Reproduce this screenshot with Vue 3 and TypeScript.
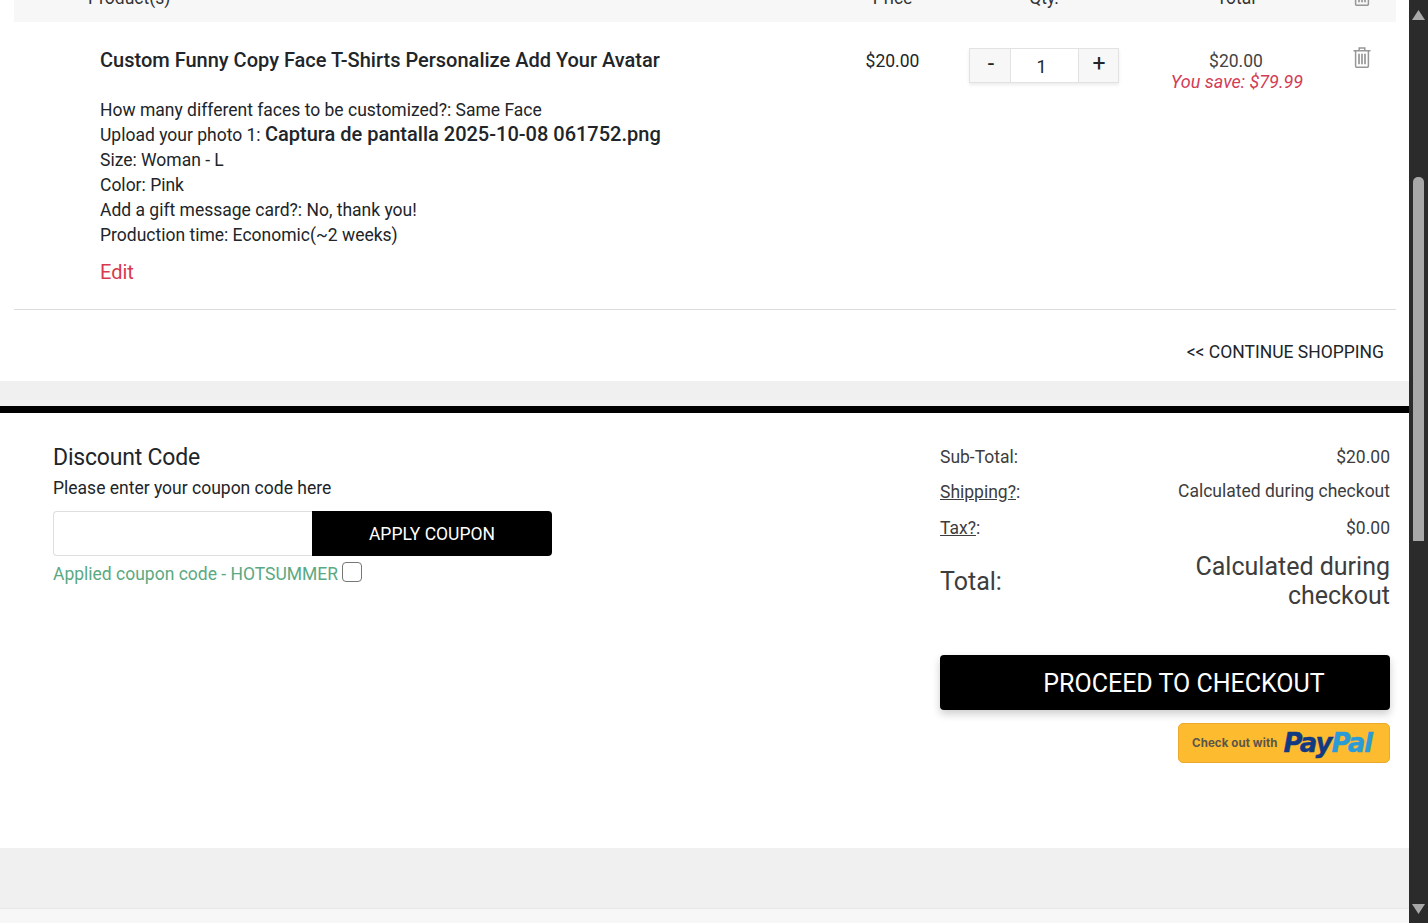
<template>
  <div class="page">
    <main class="content">
      <section class="cart">
        <div class="cart-head">
          <span class="col-product head-product">Product(s)</span>
          <span class="col-price">Price</span>
          <span class="col-qty">Qty.</span>
          <span class="col-total">Total</span>
          <span class="col-del head-del"><TrashIcon /></span>
        </div>

        <div class="cart-row">
          <div class="col-product">
            <h3 class="item-title">{{ item.title }}</h3>
            <ul class="options">
              <li v-for="opt in item.options" :key="opt.label">
                {{ opt.label }}: <strong v-if="opt.file">{{ opt.value }}</strong><template v-else>{{ opt.value }}</template>
              </li>
            </ul>
            <a class="edit">Edit</a>
          </div>
          <div class="col-price price">{{ item.price }}</div>
          <div class="col-qty">
            <div class="qty">
              <button class="qty-btn minus">-</button>
              <span class="qty-val">1</span>
              <button class="qty-btn plus">+</button>
            </div>
          </div>
          <div class="col-total total">
            <div class="total-val">{{ item.price }}</div>
            <em class="save">You save: $79.99</em>
          </div>
          <div class="col-del del"><TrashIcon /></div>
        </div>

        <div class="continue">&lt;&lt; CONTINUE SHOPPING</div>
      </section>

      <div class="band"></div>

      <section class="summary">
        <div class="discount">
          <h2>Discount Code</h2>
          <p class="hint">Please enter your coupon code here</p>
          <div class="coupon">
            <div class="coupon-input"></div>
            <button class="coupon-btn">APPLY COUPON</button>
          </div>
          <div class="applied">
            <span>Applied coupon code - HOTSUMMER</span>
            <span class="check"></span>
          </div>
        </div>

        <div class="totals">
          <div class="line first"><span>Sub-Total:</span><span>$20.00</span></div>
          <div class="line second"><span class="ship-label"><u>Shipping?</u>:</span><span>Calculated during checkout</span></div>
          <div class="line"><span><u>Tax?</u>:</span><span>$0.00</span></div>
          <div class="line grand">
            <span>Total:</span>
            <span class="grand-val">Calculated during checkout</span>
          </div>
          <button class="checkout">PROCEED TO CHECKOUT</button>
          <div class="paypal-wrap">
            <div class="paypal">
              <span class="pp-text">Check out with</span>
              <span class="pp-logo"><i>Pay</i><i class="pal">Pal</i></span>
            </div>
          </div>
        </div>
      </section>

      <div class="foot-gap"></div>
      <div class="foot"></div>
    </main>

    <aside class="scrollbar">
      <svg class="arrow" width="13" height="10" viewBox="0 0 13 10"><path d="M6.5 0 13 10H0z" fill="#a8a8a8" /></svg>
      <div class="track"><div class="thumb"></div></div>
      <svg class="arrow" width="13" height="10" viewBox="0 0 13 10"><path d="M0 0h13L6.5 10z" fill="#a8a8a8" /></svg>
    </aside>
  </div>
</template>

<script setup lang="ts">
import { h } from 'vue';

interface CartOption {
  label: string;
  value: string;
  file?: boolean;
}

const item: { title: string; price: string; options: CartOption[] } = {
  title: 'Custom Funny Copy Face T-Shirts Personalize Add Your Avatar',
  price: '$20.00',
  options: [
    { label: 'How many different faces to be customized?', value: 'Same Face' },
    { label: 'Upload your photo 1', value: 'Captura de pantalla 2025-10-08 061752.png', file: true },
    { label: 'Size', value: 'Woman - L' },
    { label: 'Color', value: 'Pink' },
    { label: 'Add a gift message card?', value: 'No, thank you!' },
    { label: 'Production time', value: 'Economic(~2 weeks)' },
  ],
};

// trash can used in the head row and on each item
const TrashIcon = () =>
  h('svg', { width: 18, height: 21, viewBox: '0 0 18 21', fill: 'none', stroke: '#979797', 'stroke-width': 1.5 }, [
    h('path', { d: 'M.5 3.7h17M6.2 3.7V1h5.6v2.7M2.6 3.7v15.2c0 .9.6 1.4 1.4 1.4h10c.8 0 1.4-.5 1.4-1.4V3.7' }),
    h('path', { d: 'M6 6.8v10.5M9 6.8v10.5M12 6.8v10.5', 'stroke-width': 1.7 }),
  ]);
</script>

<style>
html,
body {
  margin: 0;
  overflow: hidden;
}
</style>

<style scoped>
.page {
  display: flex;
  width: 1428px;
  height: 923px;
  overflow: hidden;
  font-family: Roboto, "Liberation Sans", sans-serif;
  color: #212529;
  background: #fff;
}

.content {
  flex: 0 0 1409px;
  display: flex;
  flex-direction: column;
}

/* cart table */
.cart {
  height: 381px;
  padding: 0 13px 0 14px;
  box-sizing: border-box;
  background: #fff;
}
.cart-head,
.cart-row {
  display: flex;
}
.cart-head {
  height: 22px;
  align-items: flex-end;
  overflow: hidden;
  background: #f7f7f7;
  font-size: 17.5px;
  line-height: 25px;
  color: #333;
  text-align: center;
}
.cart-head > span {
  position: relative;
  top: -11px;
}
.head-product {
  padding-left: 74px !important;
  text-align: left;
}
.cart-head > .head-del {
  top: -9px;
}
.col-product {
  flex: 0 0 800px;
  box-sizing: border-box;
  padding-left: 86px;
}
.col-price {
  flex: 0 0 154px;
  box-sizing: border-box;
  padding-left: 3px;
  text-align: center;
}
.col-qty {
  flex: 0 0 152px;
  display: flex;
  justify-content: center;
  text-align: center;
}
.col-total {
  flex: 0 0 232px;
  text-align: center;
}
.col-del {
  flex: 0 0 20px;
  text-align: center;
}

.cart-row {
  height: 288px;
  padding-top: 25px;
  box-sizing: border-box;
  border-bottom: 1px solid #dcdcdc;
  font-size: 17.5px;
}
.item-title {
  margin: 0;
  font-size: 20px;
  line-height: 26px;
  font-weight: 500;
  white-space: nowrap;
}
.options {
  list-style: none;
  margin: 25px 0 0;
  padding: 0;
  line-height: 25px;
  white-space: nowrap;
}
.options li:first-child {
  height: 24px;
}
.options strong {
  font-size: 20px;
  font-weight: 500;
}
.edit {
  display: block;
  margin-top: 11px;
  font-size: 20px;
  line-height: 26px;
  color: #d8394d;
}
.price {
  line-height: 28px;
}
.qty {
  display: flex;
  height: 35px;
  margin-top: 1px;
  border: 1px solid #e2e2e2;
  box-sizing: border-box;
  box-shadow: 0 2px 3px rgba(0, 0, 0, 0.08);
}
.qty-btn {
  width: 40px;
  padding: 0 0 4px;
  border: 0;
  background: #f7f7f7;
  font: 400 23px Roboto, sans-serif;
  color: #212529;
}
.qty-btn.minus {
  padding-left: 2px;
}
.qty-btn.plus {
  width: 39px;
  padding-left: 1px;
}
.qty-val {
  width: 69px;
  padding: 5px 6px 0 0;
  box-sizing: border-box;
  border-left: 1px solid #e2e2e2;
  border-right: 1px solid #e2e2e2;
  text-align: center;
  font-size: 18px;
  line-height: 26px;
}
.total {
  padding-top: 4px;
  color: #444;
}
.total-val {
  line-height: 20px;
}
.save {
  display: block;
  padding-left: 2px;
  font-size: 18px;
  line-height: 22px;
  color: #d23d57;
}

.continue {
  padding: 29px 12px 0 0;
  text-align: right;
  font-size: 17.5px;
  line-height: 26px;
}

.band {
  height: 25px;
  background: #f0f0f0;
  border-bottom: 7px solid #000;
}

/* discount + totals */
.summary {
  display: flex;
  justify-content: space-between;
  height: 435px;
  padding: 30px 19px 0 53px;
  box-sizing: border-box;
  font-size: 17.5px;
}
.discount {
  width: 499px;
}
.discount h2 {
  margin: 0;
  font-size: 23px;
  line-height: 29px;
  font-weight: 400;
  letter-spacing: -0.2px;
}
.hint {
  margin: 3px 0 0;
  line-height: 26px;
}
.coupon {
  display: flex;
  height: 45px;
  margin-top: 10px;
}
.coupon-input {
  flex: 1;
  border: 1px solid #dedede;
  border-right: 0;
  border-radius: 4px 0 0 4px;
}
.coupon-btn {
  flex: 0 0 240px;
  border: 0;
  border-radius: 0 4px 4px 0;
  background: #000;
  color: #fff;
  font: 400 17.5px Roboto, sans-serif;
}
.applied {
  display: flex;
  align-items: flex-start;
  margin-top: 5px;
  line-height: 26px;
  color: #5aa982;
}
.check {
  width: 18px;
  height: 18px;
  margin: 1px 0 0 4px;
  border: 1px solid #767676;
  border-radius: 4px;
}

.totals {
  width: 450px;
  padding-top: 1px;
  color: #3d3d3d;
}
.line {
  display: flex;
  justify-content: space-between;
  height: 36px;
  line-height: 26px;
}
.first {
  height: 34px;
}
.second {
  height: 37px;
}
.ship-label {
  margin-top: 1px;
}
.grand {
  height: auto;
  margin-top: 1px;
  align-items: center;
  font-size: 25px;
  line-height: 29px;
}
.grand-val {
  width: 210px;
  text-align: right;
}
.checkout {
  display: block;
  width: 100%;
  height: 55px;
  margin-top: 45px;
  padding: 2px 0 0 38px;
  border: 0;
  border-radius: 4px;
  background: #000;
  color: #fff;
  font: 400 25px Roboto, sans-serif;
  box-shadow: 0 4px 8px rgba(0, 0, 0, 0.2);
}
.paypal-wrap {
  display: flex;
  justify-content: flex-end;
  margin-top: 13px;
}
.paypal {
  display: flex;
  align-items: center;
  justify-content: center;
  gap: 6px;
  width: 212px;
  height: 40px;
  padding-right: 4px;
  box-sizing: border-box;
  border: 1px solid #eda92b;
  border-radius: 5px;
  background: #fdbb30;
}
.pp-text {
  font: 700 11.5px Inter, sans-serif;
  letter-spacing: 0.1px;
  color: #5a564a;
}
.pp-logo {
  font: 700 italic 26px "DejaVu Sans", sans-serif;
  letter-spacing: -1.1px;
  color: #123a82;
  -webkit-text-stroke: 0.4px currentColor;
}
.pp-logo i {
  font-style: italic;
}
.pp-logo .pal {
  color: #2a9bd6;
}

.foot-gap {
  height: 60px;
  background: #f0f0f0;
}
.foot {
  flex: 1;
  background: #f7f7f7;
  border-top: 1px solid #e8e8e8;
}

/* browser scrollbar */
.scrollbar {
  flex: 0 0 19px;
  display: flex;
  flex-direction: column;
  align-items: center;
  background: #2b2b2b;
}
.arrow {
  flex: none;
  margin: 10px 0 5px;
}
.arrow:last-child {
  margin: 0 0 9px;
}
.track {
  flex: 1;
  width: 100%;
}
.thumb {
  width: 11px;
  height: 364px;
  margin: 152px auto 0;
  border-radius: 5px 5px 0 0;
  background: #a8a8a8;
}
</style>
